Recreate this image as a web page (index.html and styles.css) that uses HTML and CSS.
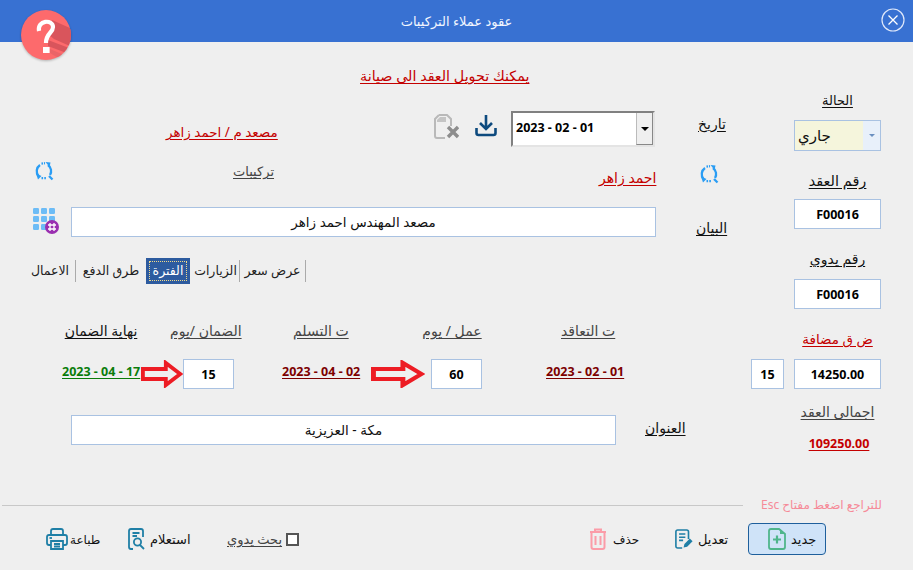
FILE: index.html
```html
<!DOCTYPE html>
<html lang="ar">
<head>
<meta charset="utf-8">
<title>عقود عملاء التركيبات</title>
<link rel="stylesheet" href="styles.css">
</head>
<body>
<div class="dialog">
  <header class="titlebar">
    <span class="title">عقود عملاء التركيبات</span>
    <svg class="logo" viewBox="0 0 52 52" aria-hidden="true">
      <defs><clipPath id="lc"><circle cx="26" cy="26" r="25"/></clipPath></defs>
      <circle cx="26" cy="26" r="25" fill="#fd6a6c"/>
      <g clip-path="url(#lc)">
        <path d="M32 11 L52 20 L52 38 L34 30 L29 26 Z" fill="#d9555c"/>
        <path d="M28 31 L52 40 L52 46 L28 37 Z" fill="#d9555c"/>
        <path d="M30 40 L44 46 L40 50 L30 44 Z" fill="#ea6468"/>
      </g>
      <path d="M19 22 C17 11 33 10 33 18 C33 24 26 24 26 34" fill="none" stroke="#fff" stroke-width="4.200"/>
      <rect x="23" y="38" width="6.600" height="6" fill="#fff"/>
    </svg>
    <svg class="close" viewBox="0 0 24 24" aria-hidden="true">
      <circle cx="12" cy="12" r="11" fill="none" stroke="#dfe8fa" stroke-width="1.200"/>
      <path d="M7.500 7.500 L16.500 16.500 M16.500 7.500 L7.500 16.500" stroke="#fff" stroke-width="1.300"/>
    </svg>
  </header>

  <main class="form">
    <section class="left">
      <div class="notice-row"><span class="lnk red notice">يمكنك تحويل العقد الى صيانة</span></div>

      <div class="row row-date">
        <span class="lnk red name-a">مصعد م / احمد زاهر</span>
        <svg class="ic-file" viewBox="0 0 26 26" aria-hidden="true">
          <path d="M6 1 H14 L18 5 V12 M12 24 H4 Q2 24 2 22 V5 L6 1" fill="none" stroke="#b9b9b9" stroke-width="2"/>
          <path d="M4 6 L7 3 H13 V8 H4 Z" fill="#c4c4c4"/>
          <path d="M15 13 L25 23 M25 13 L15 23" stroke="#8d8d8d" stroke-width="3.400"/>
        </svg>
        <svg class="ic-save" viewBox="0 0 22 24" aria-hidden="true">
          <path d="M11 2 V16 M5 10 L11 16 L17 10" fill="none" stroke="#0d4a7e" stroke-width="2.600"/>
          <path d="M1.500 15 V20 Q1.500 22 3.500 22 H18.500 Q20.500 22 20.500 20 V15" fill="none" stroke="#0d4a7e" stroke-width="2.600"/>
        </svg>
        <div class="datebox">
          <span class="datebox-val">2023 - 02 - 01</span>
          <span class="datebox-btn"><i class="tri"></i></span>
        </div>
        <span class="lnk black lbl-date">تاريخ</span>
      </div>

      <div class="row row-kind">
        <svg class="ic-ref" viewBox="0 0 20 20" aria-hidden="true"><use href="#refresh"/></svg>
        <span class="lnk gray kind">تركيبات</span>
        <span class="lnk red name-b">احمد زاهر</span>
        <svg class="ic-ref ref-b" viewBox="0 0 20 20" aria-hidden="true"><use href="#refresh"/></svg>
      </div>

      <div class="row row-desc">
        <svg class="ic-grid" viewBox="0 0 26 26" aria-hidden="true">
          <g fill="#6dbcf6">
            <rect x="0" y="0" width="6" height="6" rx="1.200"/><rect x="8" y="0" width="6" height="6" rx="1.200"/><rect x="16" y="0" width="6" height="6" rx="1.200"/>
            <rect x="0" y="8" width="6" height="6" rx="1.200"/><rect x="8" y="8" width="6" height="6" rx="1.200"/><rect x="16" y="8" width="6" height="6" rx="1.200"/>
            <rect x="0" y="16" width="6" height="6" rx="1.200"/><rect x="8" y="16" width="6" height="6" rx="1.200"/>
          </g>
          <circle cx="19" cy="19" r="7" fill="#9a2fb0"/>
          <path d="M17 15 V23 M21 15 V23 M15 17 H23 M15 21 H23" stroke="#fff" stroke-width="1.300"/>
        </svg>
        <div class="field field-desc">مصعد المهندس احمد زاهر</div>
        <span class="lnk black lbl-desc">البيان</span>
      </div>

      <nav class="tabs">
        <span class="tab t1">الاعمال</span>
        <span class="tab t2">طرق الدفع</span>
        <span class="tab tab-on"><b>الفترة</b></span>
        <span class="tab t4">الزيارات</span>
        <span class="tab t5">عرض سعر</span>
      </nav>

      <div class="row-heads">
        <span class="lnk black h1">نهاية الضمان</span>
        <span class="lnk gray h2">الضمان /يوم</span>
        <span class="lnk gray h3">ت التسلم</span>
        <span class="lnk gray h4">عمل / يوم</span>
        <span class="lnk gray h5">ت التعاقد</span>
      </div>

      <div class="row row-vals">
        <span class="lnk date green">2023 - 04 - 17</span>
        <svg class="arrow a1" viewBox="0 0 44 28" preserveAspectRatio="none" aria-hidden="true"><path d="M2 9 H26 V3 L41 14 L26 25 V19 H2 Z" fill="none" stroke="#ed1c24" stroke-width="4"/></svg>
        <div class="field num small">15</div>
        <span class="lnk date maroon d2">2023 - 04 - 02</span>
        <svg class="arrow a2" viewBox="0 0 44 28" preserveAspectRatio="none" aria-hidden="true"><path d="M2 9 H26 V3 L41 14 L26 25 V19 H2 Z" fill="none" stroke="#ed1c24" stroke-width="4"/></svg>
        <div class="field num small">60</div>
        <span class="lnk date maroon d3">2023 - 02 - 01</span>
        <div class="field num tax-rate">15</div>
      </div>

      <div class="row row-addr">
        <div class="field field-addr">مكة - العزيزية</div>
        <span class="lnk black lbl-addr">العنوان</span>
      </div>
    </section>

    <aside class="right">
      <span class="lnk black r-status">الحالة</span>
      <div class="combo"><span class="combo-val">جاري</span><span class="combo-btn"><i class="tri-s"></i></span></div>
      <span class="lnk black r-contract">رقم العقد</span>
      <div class="field num wide">F00016</div>
      <span class="lnk black r-manual">رقم يدوي</span>
      <div class="field num wide wide2">F00016</div>
      <span class="lnk red r-tax">ض ق مضافة</span>
      <div class="field num wide wide2">14250.00</div>
      <span class="lnk gray r-total">اجمالى العقد</span>
      <span class="lnk date crimson r-sum">109250.00</span>
    </aside>
  </main>

  <div class="sep">
    <hr class="rule">
    <span class="esc" dir="rtl">للتراجع اضغط مفتاح Esc</span>
  </div>

  <footer class="actions">
    <div class="act print">
      <svg class="ic" viewBox="0 0 22 22" aria-hidden="true"><g fill="none" stroke="#1f7fa6" stroke-width="1.800"><path d="M5 7 V3 Q5 1 7 1 H15 Q17 1 17 3 V7"/><path d="M5 17 H3 Q1 17 1 15 V9 Q1 7 3 7 H19 Q21 7 21 9 V15 Q21 17 19 17 H17"/><path d="M5 13 H17 V21 H5 Z"/><path d="M8 16 H14 M8 18.500 H14"/><path d="M3.500 10 H6"/></g></svg>
      <span>طباعة</span>
    </div>
    <div class="act query">
      <svg class="ic ic-tall" viewBox="0 0 18 22" aria-hidden="true"><g fill="none" stroke="#1f7fa6" stroke-width="1.800"><path d="M5 21 H3 Q1 21 1 19 V3 Q1 1 3 1 H13 Q15 1 15 3 V9"/><path d="M4.500 5 H11.500 M4.500 8 H9"/><circle cx="9.500" cy="14" r="3.600"/><path d="M12 17 L16 21"/></g></svg>
      <span>استعلام</span>
    </div>
    <label class="manual"><i class="check"></i><span class="lnk gray">بحث يدوي</span></label>
    <div class="act del">
      <svg class="ic ic-tall" viewBox="0 0 18 22" aria-hidden="true"><g fill="none" stroke="#fb9ca8" stroke-width="2"><path d="M1 4 H17 M6 4 V1.500 H12 V4"/><path d="M2.500 4 V19 Q2.500 21 4.500 21 H13.500 Q15.500 21 15.500 19 V4"/><path d="M6.500 8 V17 M11.500 8 V17"/></g></svg>
      <span>حذف</span>
    </div>
    <div class="act edit">
      <svg class="ic ic-tall" viewBox="0 0 20 22" aria-hidden="true"><g fill="none" stroke="#1f7fa6" stroke-width="1.800"><path d="M8 21 H3 Q1 21 1 19 V3 Q1 1 3 1 H13 Q15 1 15 3 V11"/><path d="M4.500 5.500 H11.500 M4.500 9 H11.500 M4.500 12.500 H9"/></g><path d="M9.500 20.500 L10.500 16.500 L16.500 10.500 L19.500 13.500 L13.500 19.500 Z" fill="#1f7fa6"/></svg>
      <span>تعديل</span>
    </div>
    <div class="act new">
      <svg class="ic ic-tall" viewBox="0 0 18 22" aria-hidden="true"><g fill="none" stroke="#4fb58b" stroke-width="1.800"><path d="M11 1 H3 Q1 1 1 3 V19 Q1 21 3 21 H15 Q17 21 17 19 V6 Z"/><path d="M9 7.500 V15.500 M5 11.500 H13" stroke-width="2.200"/></g><path d="M12 1 L17 6 H12 Z" fill="#4fb58b"/></svg>
      <span>جديد</span>
    </div>
  </footer>
</div>

<svg class="defs" aria-hidden="true">
  <symbol id="refresh" viewBox="0 0 20 20">
    <g fill="none" stroke="#2a9df4" stroke-width="2.300">
      <path d="M6 4 A7.500 7.500 0 0 0 4.500 15"/>
      <path d="M7.500 2.600 L11 2.200" stroke-dasharray="1.500 1"/>
      <path d="M14 4 A7.500 7.500 0 0 1 16 14"/>
      <path d="M7.500 17.200 L12.500 17.200" stroke-dasharray="1.600 1.200"/>
      <path d="M15 15 L18.500 18.500"/>
    </g>
    <path d="M11.500 1 L16.500 1.500 L15.500 6 Z" fill="#2a9df4"/>
    <path d="M2 12.500 L7.500 15 L4 18.500 Z" fill="#2a9df4"/>
  </symbol>
</svg>
</body>
</html>
```
FILE: styles.css
```css
* { box-sizing: border-box; }
html, body { margin: 0; padding: 0; }
body {
  width: 913px;
  height: 570px;
  overflow: hidden;
  background: #efefef;
  font-family: "Noto Sans", "DejaVu Sans", sans-serif;
  font-size: 12px;
  color: #111;
}
.defs { display: none; }
.dialog { display: flex; flex-direction: column; width: 913px; height: 570px; position: relative; }

/* title bar */
.titlebar {
  height: 42px;
  flex: none;
  background: #3871d2;
  display: flex;
  align-items: center;
  justify-content: center;
  color: #f2f6ff;
}
.title { font-size: 13px; }
.logo { position: absolute; left: 20px; top: 9px; width: 52px; height: 52px; filter: drop-shadow(0 1px 1px rgba(0,0,0,.25)); }
.close { position: absolute; left: 881px; top: 8px; width: 24px; height: 24px; }

/* main */
.form { display: flex; flex: none; height: 448px; }
.left { width: 790px; flex: none; display: flex; flex-direction: column; }
.right { width: 123px; display: flex; flex-direction: column; align-items: center; padding-left: 4px; padding-right: 32px; }

.lnk { text-decoration: underline; font-size: 14px; line-height: 16px; white-space: nowrap; text-underline-offset: 2px; flex: none; }
.red { color: #c40000; }
.black { color: #111; }
.gray { color: #444; }
.green { color: #0a7d0a; }
.maroon { color: #7d0000; }
.crimson { color: #c40000; }
.date { font-weight: 700; font-size: 12.5px; }
.notice { font-size: 14.3px; }

.notice-row { height: 16px; margin-top: 26px; padding-left: 360px; line-height: 16px; }

.row { display: flex; align-items: center; }
.row-date { height: 36px; margin-top: 27px; padding-left: 166px; }
.name-a { width: 111px; align-self: flex-end; margin-bottom: 7px; font-size: 13.5px; }
.ic-file { width: 26px; height: 26px; margin-left: 156px; margin-top: -4px; }
.ic-save { width: 22px; height: 24px; margin-left: 16px; margin-top: -8px; }
.datebox {
  width: 144px; height: 36px; margin-left: 14px;
  display: flex; background: #fff; flex: none;
  border-style: solid; border-width: 2px; border-color: #808080 #e4e4e4 #e4e4e4 #808080;
}
.datebox-val { flex: 1; font-weight: 700; font-size: 12.5px; color: #000; padding: 6px 0 0 3px; }
.datebox-btn { width: 17px; background: #efefef; border-left: 1px solid #bbb; border-bottom: 1px solid #888; border-right: 1px solid #888; display: flex; align-items: center; justify-content: center; }
.tri { width: 0; height: 0; border-left: 4px solid transparent; border-right: 4px solid transparent; border-top: 4px solid #000; }
.lbl-date { margin-left: 43px; width: 28px; margin-top: -11px; }

.row-kind { height: 26px; margin-top: 13px; padding-left: 34px; }
.ic-ref { width: 20px; height: 20px; margin-top: -4px; flex: none; }
.kind { margin-left: 179px; margin-top: -4px; width: 42px; font-size: 13px; }
.name-b { margin-left: 324px; width: 56px; margin-top: 10px; }
.ref-b { margin-left: 44px; margin-top: 1px; }

.row-desc { height: 30px; margin-top: 21px; padding-left: 33px; }
.ic-grid { width: 26px; height: 26px; margin-top: -2px; flex: none; }
.field {
  background: #fff; border: 1px solid #a9c2e2; height: 30px; flex: none;
  display: flex; align-items: center; justify-content: center;
  font-size: 13.5px; color: #111;
}
.field-desc { width: 585px; margin-left: 12px; }
.lbl-desc { margin-left: 40px; margin-top: 12px; width: 30px; }

.tabs { display: flex; align-items: center; height: 26px; margin-top: 21px; padding-left: 30px; }
.tab { font-size: 12.5px; color: #222; white-space: nowrap; border-right: 1px solid #aaa; height: 22px; line-height: 22px; text-align: center; flex: none; }
.t1 { width: 46px; padding-right: 5px; }
.t2 { width: 70px; border-right: 0; }
.t4 { width: 50px; padding-left: 2px; }
.t5 { width: 66px; }
.tab-on { width: 44px; background: #2d5b9f; color: #fff; height: 26px; padding: 3px; border-right: 0; }
.tab-on b { display: block; font-weight: 400; height: 20px; line-height: 18px; border: 1px dotted #f0d98a; }

.row-heads { height: 16px; margin-top: 39px; display: grid; grid-template-columns: 64px 74px 32px 69px 54px 55px 70px 68px 75px 53px; }
.row-heads .lnk { text-align: center; }
.h1 { grid-column: 2; }
.h2 { grid-column: 4; }
.h3 { grid-column: 6; }
.h4 { grid-column: 8; }
.h5 { grid-column: 10; }

.row-vals { height: 30px; margin-top: 20px; padding-left: 62px; }
.row-vals .date { width: 78px; margin-top: -4px; }
.arrow { height: 28px; flex: none; }
.a1 { width: 42px; margin-left: 1px; }
.a2 { width: 54px; margin-left: 11px; margin-right: 6px; }
.num { font-weight: 700; font-size: 12.5px; color: #000; }
.small { width: 51px; }
.d2 { margin-left: 48px; }
.d3 { margin-left: 64px; }
.tax-rate { width: 33px; margin-left: 127px; }

.row-addr { height: 30px; margin-top: 26px; padding-left: 71px; }
.field-addr { width: 545px; }
.lbl-addr { margin-left: 29px; margin-top: -4px; width: 41px; }

/* right column */
.r-status { margin-top: 50px; font-size: 13px; }
.combo { width: 87px; height: 31px; margin-top: 12px; border: 1px solid #a9c2e2; display: flex; flex: none; }
.combo-val { flex: 1; background: #f5f5dc; font-size: 15px; padding: 4px 0 0 3px; }
.combo-btn { width: 17px; background: #e8f0fa; display: flex; align-items: center; justify-content: center; }
.tri-s { width: 0; height: 0; border-left: 3px solid transparent; border-right: 3px solid transparent; border-top: 3px solid #6a8fc0; }
.r-contract { margin-top: 21px; font-size: 14.5px; }
.wide { width: 87px; margin-top: 11px; }
.wide2 { margin-top: 12px; }
.r-manual { margin-top: 22px; }
.r-tax { margin-top: 22px; font-size: 13.5px; }
.r-total { margin-top: 15px; }
.r-sum { margin-top: 16px; margin-left: 3px; }

/* footer */
.sep { flex: none; height: 20px; display: flex; align-items: center; padding-left: 2px; margin-top: 5px; }
.rule { width: 741px; margin: 0; border: 0; border-top: 1px solid #c8c8c8; }
.esc { margin-left: 18px; font-size: 12px; color: #f68a98; white-space: nowrap; margin-top: -2px; }

.actions { flex: none; display: flex; align-items: center; height: 32px; margin-top: 8px; padding-left: 46px; }
.act { display: flex; align-items: center; gap: 4px; font-size: 13px; color: #111; flex: none; }
.ic { width: 22px; height: 22px; flex: none; }
.ic-tall { width: 18px; height: 22px; }
.print { width: 82px; font-size: 12px; gap: 2px; }
.query { width: 80px; }
.manual { display: flex; align-items: center; gap: 4px; margin-left: 19px; flex-direction: row-reverse; width: 72px; flex: none; justify-content: flex-end; }
.manual .lnk { font-size: 13px; }
.check { width: 13px; height: 13px; background: #fff; border: 2px solid #555; flex: none; }
.del { margin-left: 290px; width: 86px; gap: 6px; font-size: 12px; }
.edit { width: 73px; gap: 5px; }
.new { width: 78px; height: 32px; background: #cfe3f8; border: 1px solid #1e5f9c; border-radius: 4px; padding-left: 19px; gap: 5px; }
```
